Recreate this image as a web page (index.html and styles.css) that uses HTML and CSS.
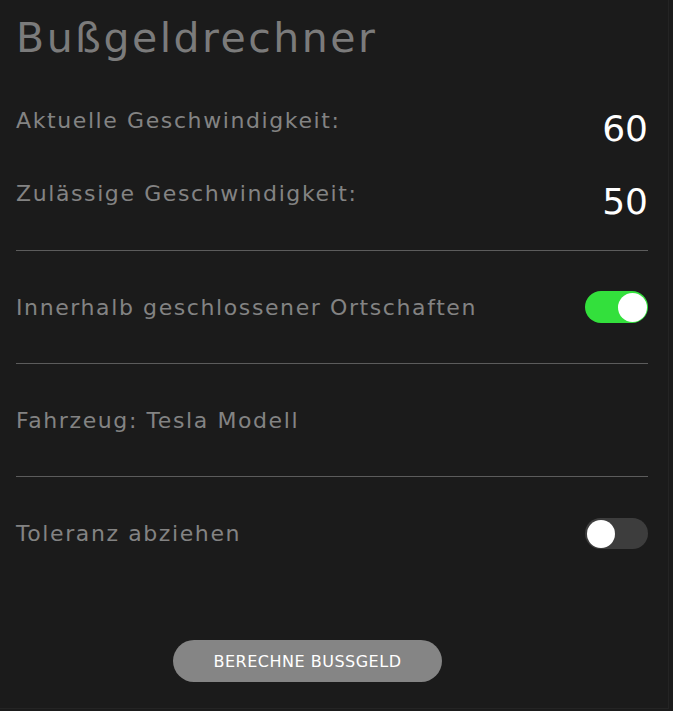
FILE: index.html
```html
<!DOCTYPE html>
<html lang="de">
<head>
<meta charset="utf-8">
<title>Bußgeldrechner</title>
<link rel="stylesheet" href="styles.css">
</head>
<body>
<div class="app">
  <h1 class="title">Bußgeldrechner</h1>
  <div class="speeds">
    <div class="speed-row">
      <span class="label">Aktuelle Geschwindigkeit:</span>
      <span class="value">60</span>
    </div>
    <div class="speed-row">
      <span class="label">Zulässige Geschwindigkeit:</span>
      <span class="value">50</span>
    </div>
  </div>
  <div class="section">
    <span class="label">Innerhalb geschlossener Ortschaften</span>
    <span class="toggle on"><span class="knob"></span></span>
  </div>
  <div class="section">
    <span class="label">Fahrzeug: Tesla Modell</span>
  </div>
  <div class="section last">
    <span class="label">Toleranz abziehen</span>
    <span class="toggle"><span class="knob"></span></span>
  </div>
  <div class="actions">
    <button class="btn">BERECHNE BUSSGELD</button>
  </div>
</div>
</body>
</html>
```

FILE: styles.css
```css
* { box-sizing: border-box; }
html, body { margin: 0; padding: 0; background: #1b1b1b; }
body { font-family: "DejaVu Sans", "Open Sans", sans-serif; }
.app {
  width: 669px;
  height: 709px;
  border-right: 1px solid #242424;
  border-bottom: 1px solid #242424;
  padding: 0 20px 0 16px;
  display: flex;
  flex-direction: column;
}
.title {
  margin: 10px 0 0 0;
  font-weight: 400;
  font-size: 41px;
  line-height: 56px;
  letter-spacing: 2.5px;
  color: #7b7b7b;
}
.label {
  font-size: 22px;
  letter-spacing: 1.6px;
  color: #838383;
}
.speeds {
  margin-top: 40px;
  border-bottom: 1px solid #5c5c5c;
  height: 145px;
  flex: none;
}
.speed-row {
  display: flex;
  justify-content: space-between;
  align-items: flex-start;
  height: 73px;
}
.value {
  font-size: 36px;
  color: #ffffff;
  line-height: 40px;
  margin-top: 3px;
}
.speed-row .label { line-height: 30px; }
.section {
  height: 113px;
  flex: none;
  border-bottom: 1px solid #5c5c5c;
  display: flex;
  align-items: center;
  justify-content: space-between;
}
.section.last { border-bottom: none; }
.toggle {
  width: 63px;
  height: 31px;
  border-radius: 16px;
  background: #3d3d3d;
  position: relative;
}
.toggle .knob {
  position: absolute;
  top: 1.5px;
  left: 2px;
  width: 28px;
  height: 28px;
  border-radius: 50%;
  background: #ffffff;
}
.toggle.on { background: #33e03c; height: 32px; }
.toggle.on .knob { left: auto; right: 1px; top: 1.5px; width: 29px; height: 29px; }
.actions {
  display: flex;
  justify-content: center;
  margin-top: 50px;
  padding-right: 49px;
}
.btn {
  width: 269px;
  height: 42px;
  border: none;
  border-radius: 21px;
  background: #858585;
  color: #ffffff;
  font-family: inherit;
  font-size: 16px;
  letter-spacing: 0.5px;
}
```
